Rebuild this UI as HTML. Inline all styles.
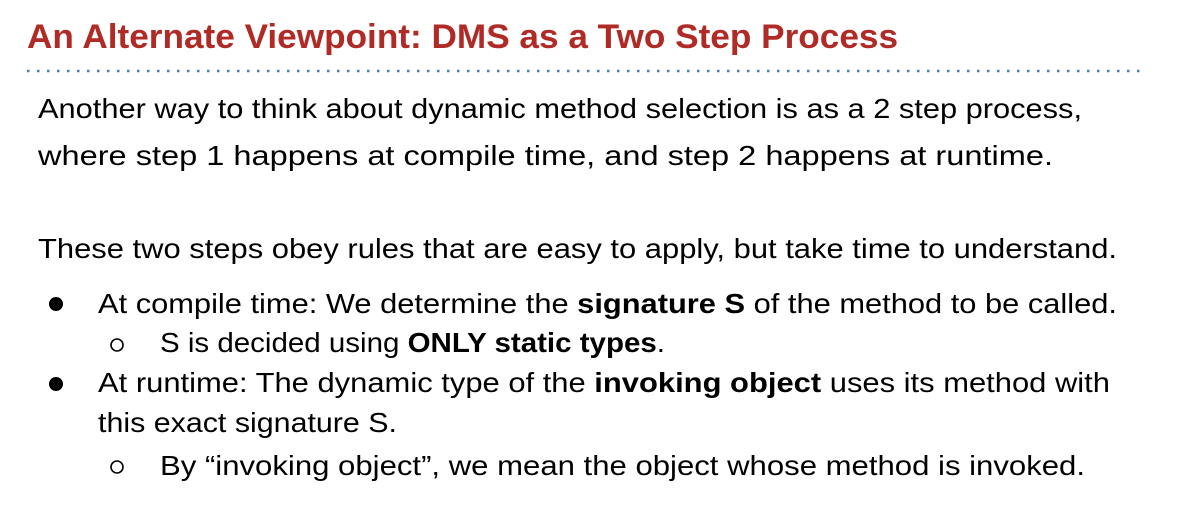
<!DOCTYPE html>
<html><head><meta charset="utf-8"><style>
html,body{margin:0;padding:0;background:#fff;width:1184px;height:524px;overflow:hidden}
svg{display:block}
text{font-family:"Liberation Sans",sans-serif;fill:#000}
</style></head><body>
<svg width="1184" height="524" xmlns="http://www.w3.org/2000/svg">
<text x="27" y="48" font-size="34" font-weight="bold" style="fill:#b02a26" textLength="871" lengthAdjust="spacingAndGlyphs">An Alternate Viewpoint: DMS as a Two Step Process</text>
<line x1="27" y1="71" x2="1146" y2="71" stroke="#4a7cc4" stroke-width="2.5" stroke-dasharray="2.5 7.5"/>
<g font-size="28">
<text x="38" y="118" textLength="1044" lengthAdjust="spacingAndGlyphs">Another way to think about dynamic method selection is as a 2 step process,</text>
<text x="38" y="165" textLength="1015" lengthAdjust="spacingAndGlyphs">where step 1 happens at compile time, and step 2 happens at runtime.</text>
<text x="38" y="258" textLength="1079" lengthAdjust="spacingAndGlyphs">These two steps obey rules that are easy to apply, but take time to understand.</text>
<circle cx="56" cy="304" r="7"/>
<text x="98" y="313" textLength="1019" lengthAdjust="spacingAndGlyphs">At compile time: We determine the <tspan font-weight="bold">signature S</tspan> of the method to be called.</text>
<circle cx="117" cy="345" r="6" fill="none" stroke="#000" stroke-width="1.6"/>
<text x="160" y="352" textLength="505" lengthAdjust="spacingAndGlyphs">S is decided using <tspan font-weight="bold">ONLY static types</tspan>.</text>
<circle cx="56" cy="384" r="7"/>
<text x="98" y="392" textLength="1012" lengthAdjust="spacingAndGlyphs">At runtime: The dynamic type of the <tspan font-weight="bold">invoking object</tspan> uses its method with</text>
<text x="98" y="432" textLength="299" lengthAdjust="spacingAndGlyphs">this exact signature S.</text>
<circle cx="117" cy="467" r="6" fill="none" stroke="#000" stroke-width="1.6"/>
<text x="160" y="475" textLength="925" lengthAdjust="spacingAndGlyphs">By “invoking object”, we mean the object whose method is invoked.</text>
</g>
</svg>
</body></html>
